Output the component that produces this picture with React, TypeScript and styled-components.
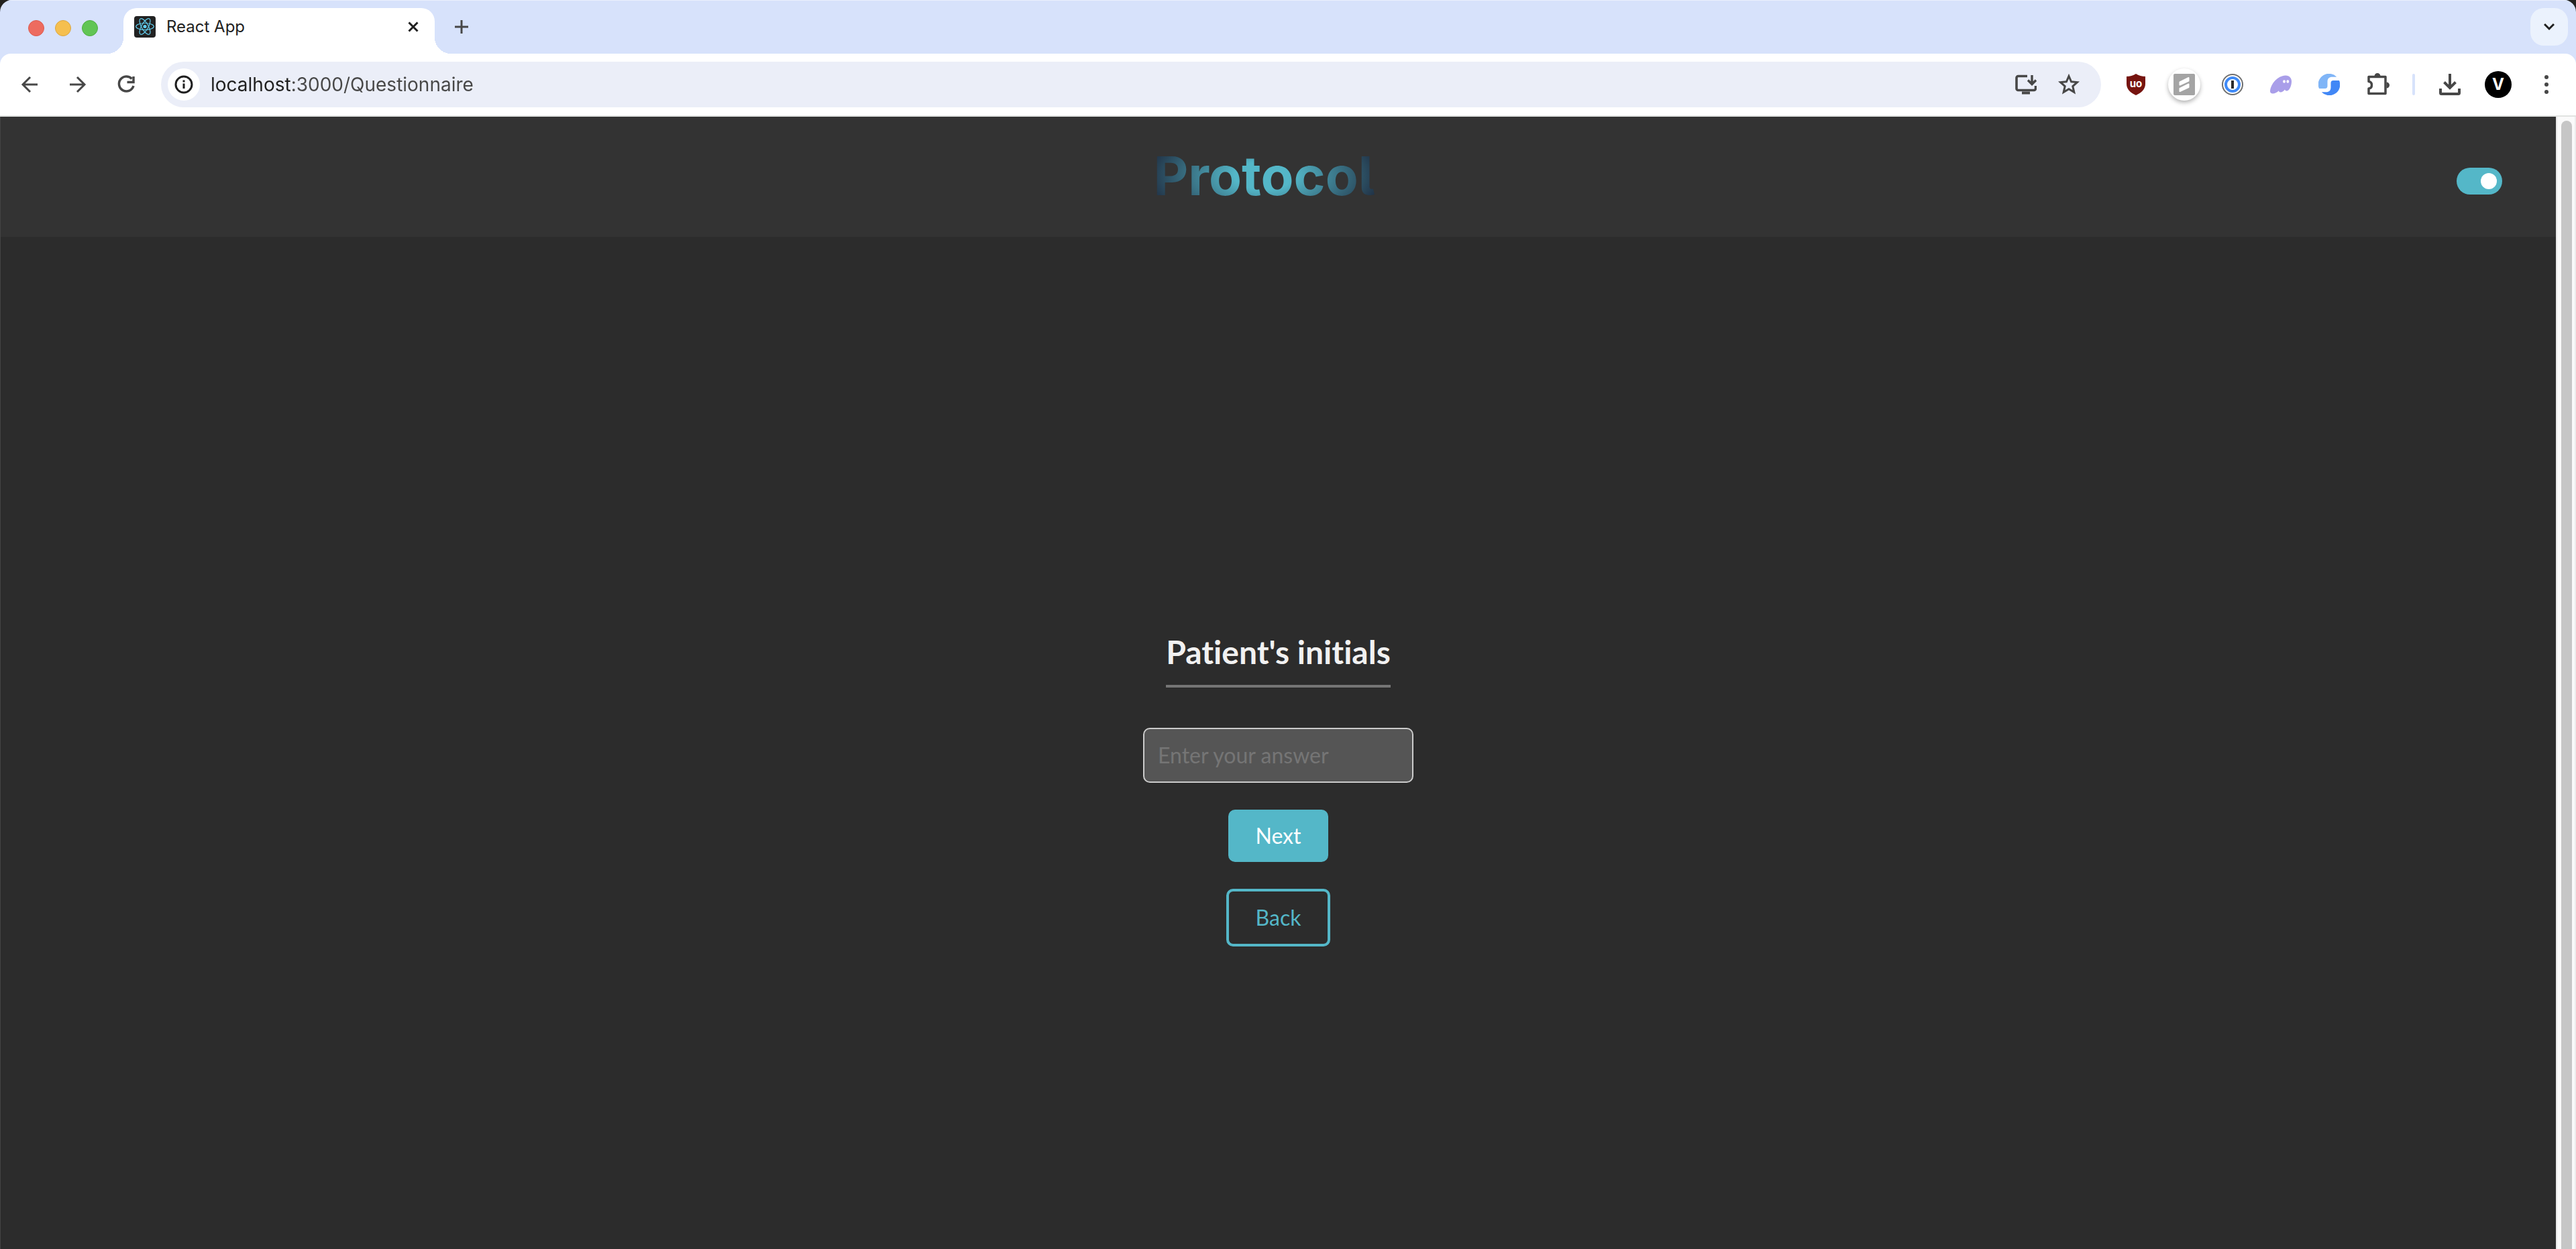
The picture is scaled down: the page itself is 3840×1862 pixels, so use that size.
import React, { useState } from 'react';
import styled, { createGlobalStyle, css } from 'styled-components';

const TEAL = '#54b7c8';
const INK = '#474747';
const UI_FONT = "Inter, 'Liberation Sans', sans-serif";
const PAGE_FONT = "Lato, 'Open Sans', sans-serif";

const GlobalStyle = createGlobalStyle`
  *, *::before, *::after { box-sizing: border-box; }
  body { margin: 0; background: #23221f; font-family: ${UI_FONT}; }
  button, input { font: inherit; margin: 0; }
`;

const BrowserWindow = styled.div`
  display: flex;
  flex-direction: column;
  height: 100vh;
  overflow: hidden;
  border-radius: 18px 18px 0 0;
  background: #d7e2fb;
`;

/* ---------- tab strip ---------- */

const TabStrip = styled.header`
  display: flex;
  align-items: flex-end;
  height: 80px;
  flex: none;
  padding-right: 12px;
  border-top: 1px solid #eaf0fc;
`;

const WindowControls = styled.div`
  display: flex;
  align-self: center;
  gap: 16px;
  width: 184px;
  padding: 2px 0 0 42px;
`;

const Light = styled.button<{ $fill: string; $edge: string }>`
  width: 24px;
  height: 24px;
  padding: 0;
  border: 1px solid ${(p) => p.$edge};
  border-radius: 50%;
  background: ${(p) => p.$fill};
`;

const Tab = styled.div`
  position: relative;
  display: flex;
  align-items: center;
  width: 464px;
  height: 68px;
  padding: 0 16px 12px;
  border-radius: 20px 20px 0 0;
  background: #fff;

  &::before,
  &::after {
    content: '';
    position: absolute;
    bottom: 0;
    width: 24px;
    height: 24px;
  }
  &::before {
    right: 100%;
    background: radial-gradient(circle at 0 0, transparent 24px, #fff 24px);
  }
  &::after {
    left: 100%;
    background: radial-gradient(circle at 100% 0, transparent 24px, #fff 24px);
  }
`;

const TabTitle = styled.span`
  flex: 1;
  padding-left: 16px;
  font-size: 24px;
  line-height: 32px;
  color: #1f1f1f;
`;

const IconButton = styled.button<{ $width?: number }>`
  display: flex;
  align-items: center;
  justify-content: center;
  flex: none;
  width: ${(p) => p.$width ?? 72}px;
  height: 56px;
  padding: 0;
  border: 0;
  background: none;
  color: ${INK};
`;

const StripButton = styled(IconButton)`
  margin: 0 12px 12px;
`;

const TabSearch = styled(StripButton)`
  margin: 0 0 12px auto;
  border-radius: 20px;
  background: #ebf2fd;
  color: #1f1f1f;
`;

/* ---------- toolbar ---------- */

const Toolbar = styled.div`
  display: flex;
  align-items: center;
  flex: none;
  height: 94px;
  padding: 0 8px;
  border-bottom: 2px solid #e1e3e1;
  border-radius: 16px 16px 0 0;
  background: #fff;
`;

const AddressBar = styled.div`
  display: flex;
  align-items: center;
  flex: 1;
  height: 68px;
  margin: 0 16px;
  padding: 0 16px 0 10px;
  border-radius: 34px;
  background: #ebeef8;
`;

const SiteInfo = styled.button`
  display: flex;
  align-items: center;
  justify-content: center;
  width: 48px;
  height: 48px;
  padding: 0;
  border: 0;
  border-radius: 50%;
  background: #fff;
  color: #1f1f1f;
`;

const Address = styled.input`
  flex: 1;
  min-width: 0;
  height: 40px;
  margin-left: 16px;
  padding: 0;
  border: 0;
  outline: 0;
  font-size: 28px;
  line-height: 40px;
  color: transparent;
  background: linear-gradient(90deg, #1f1f1f 120px, ${INK} 120px);
  background-clip: text;
  -webkit-background-clip: text;
`;

const Raised = styled.span`
  display: flex;
  align-items: center;
  justify-content: center;
  width: 48px;
  height: 48px;
  border-radius: 50%;
  background: #fff;
  box-shadow: 0 3px 6px rgba(0, 0, 0, 0.3);
`;

const Divider = styled.span`
  width: 4px;
  height: 32px;
  margin: 0 16px;
  border-radius: 2px;
  background: #d7e2fb;
`;

const Avatar = styled.span`
  display: flex;
  align-items: center;
  justify-content: center;
  width: 40px;
  height: 40px;
  border-radius: 50%;
  background: #000;
  color: #fff;
  font-size: 24px;
  font-weight: 700;
  line-height: 40px;
`;

/* ---------- page ---------- */

const Viewport = styled.div`
  display: flex;
  flex: 1;
  min-height: 0;
`;

const Page = styled.div`
  display: flex;
  flex-direction: column;
  flex: 1;
  border-left: 1px solid #444;
  background: #2c2c2c;
  color: #f1f1f1;
  font-family: ${PAGE_FONT};
`;

const PageHeader = styled.header`
  display: flex;
  align-items: center;
  justify-content: space-between;
  padding: 40px 80px 43px;
  background: #333;

  &::before {
    content: '';
    width: 26px;
  }
`;

const Brand = styled.h1`
  margin: 0;
  font-family: ${UI_FONT};
  font-feature-settings: 'cv05';
  font-size: 80px;
  font-weight: 700;
  line-height: 96px;
  color: transparent;
  background: radial-gradient(54% 85% at center, ${TEAL} 25%, #203044 100%);
  background-clip: text;
  -webkit-background-clip: text;
`;

const Switch = styled.input`
  appearance: none;
  display: flex;
  align-items: center;
  width: 68px;
  height: 40px;
  margin-top: 16px;
  padding: 8px;
  border-radius: 20px;
  background: #777;

  &::after {
    content: '';
    width: 24px;
    height: 24px;
    border-radius: 50%;
    background: #fff;
  }
  &:checked {
    justify-content: flex-end;
    background: ${TEAL};
  }
`;

const Main = styled.main`
  display: flex;
  flex: 1;
  flex-direction: column;
  align-items: center;
  justify-content: center;
  padding-top: 139px;
`;

const Form = styled.form`
  display: flex;
  flex-direction: column;
  align-items: center;
  gap: 40px;
  font-size: 32px;
  line-height: 38px;
  font-variant-ligatures: none;
`;

const Question = styled.label`
  margin-bottom: 20px;
  padding-bottom: 20px;
  border-bottom: 4px solid #757575;
  font-size: 48px;
  font-weight: 700;
  line-height: 58px;
`;

const Answer = styled.input`
  width: 403px;
  padding: 20px;
  border: 2px solid #ccc;
  border-radius: 10px;
  outline: 0;
  background: #555;
  color: #f1f1f1;

  &::placeholder {
    color: #757575;
  }
`;

const Action = styled.button<{ $outlined?: boolean }>`
  padding: 20px 40px;
  border: 0;
  border-radius: 10px;
  background: ${TEAL};
  color: #fff;
  ${(p) =>
    p.$outlined &&
    css`
      border: 4px solid ${TEAL};
      background: transparent;
      color: ${TEAL};
    `}
`;

const ScrollTrack = styled.div`
  display: flex;
  width: 30px;
  padding: 6px 4px 0 6px;
  border-left: 2px solid #e8e8e8;
  border-right: 2px solid #ededed;
  background: #fafafa;
`;

const ScrollThumb = styled.div`
  flex: 1;
  border-radius: 8px 8px 0 0;
  background: #c6c6c6;
`;

/* ---------- drawings ---------- */

const Glyph = ({ size = 32, children }: { size?: number; children: React.ReactNode }) => (
  <svg width={size} height={size} viewBox={`0 0 ${size} ${size}`} fill="none" stroke="currentColor" strokeWidth="3" aria-hidden="true">
    {children}
  </svg>
);

const ReactLogo = () => (
  <svg width="32" height="32" viewBox="0 0 32 32" fill="none" stroke="#61cdee" strokeWidth="1.2" aria-hidden="true">
    <rect width="32" height="32" rx="4" fill="#222" stroke="none" />
    <ellipse cx="16" cy="15.5" rx="13.3" ry="5" />
    <ellipse cx="16" cy="15.5" rx="13.3" ry="5" transform="rotate(60 16 15.5)" />
    <ellipse cx="16" cy="15.5" rx="13.3" ry="5" transform="rotate(120 16 15.5)" />
    <circle cx="16" cy="15.5" r="2.6" fill="#61cdee" stroke="none" />
  </svg>
);

const Shield = () => (
  <Glyph>
    <path d="M16 0c4 2.800 9 4 14 4v11c0 8-6 13.500-14 17C8 28.500 2 23 2 15V4c5 0 10-1.200 14-4z" fill="#76140f" stroke="none" />
    <text x="16" y="20" textAnchor="middle" fontFamily="Inter, sans-serif" fontSize="15" fontWeight="700" fill="#fff" stroke="none">uo</text>
  </Glyph>
);

const SlashBox = () => (
  <Glyph>
    <rect width="32" height="32" rx="2" fill="#a4a4a4" stroke="none" />
    <path d="M9.500 16.500v-4L22.500 6v4.500zM9.500 26v-4l13-6.500V20z" fill="#fff" stroke="#fff" strokeWidth="2" strokeLinejoin="round" />
  </Glyph>
);

const KeyRing = () => (
  <Glyph>
    <circle cx="16" cy="16" r="15" stroke="#6f6f6f" strokeWidth="2" />
    <circle cx="16" cy="16" r="10" stroke="#3f8af7" strokeWidth="4" />
    <path d="M16 10v12" stroke="#2b2b2b" strokeWidth="4" />
  </Glyph>
);

const Ghost = () => (
  <Glyph>
    <path d="M0 26C1 15 11 3 23 2.500c6 0 9 4 9 9 0 6-3 14-7.500 14-1.500 0-2-1-2.500-2-1.500 2-4 4-6.500 4-1.500 0-2.500-.8-2.500-2.200C10.500 28 7 29.500 4 29.500c-2.500 0-4-1.500-4-3.500z" fill="#a99ee9" stroke="none" />
    <ellipse cx="21" cy="11.500" rx="1.900" ry="2.200" fill="#fff" stroke="none" />
    <ellipse cx="26.300" cy="11.500" rx="1.900" ry="2.200" fill="#fff" stroke="none" />
  </Glyph>
);

const Swirl = () => (
  <Glyph>
    <path d="M27.300 4.700A16 16 0 0 0 1 22h8.500c3 0 4-1.300 4-4v-6c0-5 2.500-7.300 7-7.300z" fill="#80b5f7" stroke="none" />
    <path d="M31 10h-8.500c-3 0-4 1.300-4 4v6c0 5-2.500 7.300-7 7.300H4.700A16 16 0 0 0 31 10z" fill="#4187f6" stroke="none" />
  </Glyph>
);

const Puzzle = () => (
  <Glyph size={36}>
    <path d="M5 6.500h25v25H5V24c6-.8 6-9.700 0-10.500z" strokeWidth="3.500" strokeLinejoin="round" />
    <path d="M13.500 5.500a4.500 4.500 0 0 1 9 0zM31.500 14.500a4.500 4.500 0 0 1 0 9z" fill="currentColor" stroke="none" />
  </Glyph>
);

const extensions = [
  { name: 'uBlock Origin', icon: <Shield /> },
  { name: 'Recorder', icon: <Raised><SlashBox /></Raised> },
  { name: '1Password', icon: <KeyRing /> },
  { name: 'Phantom', icon: <Ghost /> },
  { name: 'Grammar', icon: <Swirl /> },
  { name: 'Extensions', icon: <Puzzle /> },
];

export default function App() {
  const [dark, setDark] = useState(true);
  const [answer, setAnswer] = useState('');

  return (
    <>
      <GlobalStyle />
      <BrowserWindow>
        <TabStrip>
          <WindowControls>
            <Light aria-label="Close window" $fill="#ed6b5f" $edge="#dc5b50" />
            <Light aria-label="Minimize window" $fill="#f5bf4f" $edge="#dba640" />
            <Light aria-label="Zoom window" $fill="#61c554" $edge="#50ae42" />
          </WindowControls>
          <Tab>
            <ReactLogo />
            <TabTitle>React App</TabTitle>
            <IconButton $width={32} aria-label="Close tab">
              <Glyph size={16}><path d="M1.500 1.500l13 13M14.500 1.500l-13 13" stroke="#1f1f1f" /></Glyph>
            </IconButton>
          </Tab>
          <StripButton $width={56} aria-label="New tab">
            <Glyph size={20}><path d="M10 0v20M0 10h20" /></Glyph>
          </StripButton>
          <TabSearch $width={56} aria-label="Search tabs">
            <Glyph size={16}><path d="M1 4l7 7 7-7" /></Glyph>
          </TabSearch>
        </TabStrip>

        <Toolbar>
          <IconButton aria-label="Back">
            <Glyph><path d="M28 16H6M17 5L6 16l11 11" /></Glyph>
          </IconButton>
          <IconButton aria-label="Forward">
            <Glyph><path d="M4 16h22M15 5l11 11-11 11" /></Glyph>
          </IconButton>
          <IconButton aria-label="Reload">
            <Glyph>
              <path d="M24.500 7.500A11 11 0 1 0 27 18" strokeWidth="3.500" />
              <path d="M27 4v8.500H17.500" strokeWidth="3.500" />
            </Glyph>
          </IconButton>
          <AddressBar>
            <SiteInfo aria-label="View site information">
              <Glyph>
                <circle cx="16" cy="16" r="12" />
                <path d="M16 14.500V22M16 9.500v3" />
              </Glyph>
            </SiteInfo>
            <Address aria-label="Address" defaultValue="localhost:3000/Questionnaire" />
            <IconButton $width={64} aria-label="Install app">
              <Glyph>
                <path d="M18 3.500H4.500a2.500 2.500 0 0 0-2.500 2.500v16a2.500 2.500 0 0 0 2.500 2.500h23.500a2.500 2.500 0 0 0 2.500-2.500v-4" strokeWidth="3.600" />
                <path d="M10 28.500h12" strokeWidth="4" />
                <path d="M25 2v13M19 9.500l6 6 6-6" strokeWidth="3.400" />
              </Glyph>
            </IconButton>
            <IconButton $width={64} aria-label="Bookmark this tab">
              <Glyph>
                <path d="M16 3.500l3.600 8.300 9 .8-6.800 6 2 8.800L16 22.800l-7.800 4.600 2-8.800-6.800-6 9-.8z" />
              </Glyph>
            </IconButton>
          </AddressBar>
          {extensions.map((e) => (
            <IconButton key={e.name} aria-label={e.name}>{e.icon}</IconButton>
          ))}
          <Divider />
          <IconButton aria-label="Downloads">
            <Glyph>
              <path d="M16 0v21M7.500 12.500L16 21l8.500-8.500M2 22v6.500c0 1 .5 1.500 1.500 1.500h25c1 0 1.500-.5 1.500-1.500V22" strokeWidth="4" />
            </Glyph>
          </IconButton>
          <IconButton aria-label="Profile"><Avatar>V</Avatar></IconButton>
          <IconButton aria-label="Menu">
            <Glyph>
              <g fill="currentColor" stroke="none">
                <circle cx="16" cy="5" r="3" />
                <circle cx="16" cy="16" r="3" />
                <circle cx="16" cy="27" r="3" />
              </g>
            </Glyph>
          </IconButton>
        </Toolbar>

        <Viewport>
          <Page>
            <PageHeader>
              <Brand>Protocol</Brand>
              <Switch type="checkbox" aria-label="Dark mode" checked={dark} onChange={(e) => setDark(e.target.checked)} />
            </PageHeader>
            <Main>
              <Form onSubmit={(e) => e.preventDefault()}>
                <Question htmlFor="answer">Patient's initials</Question>
                <Answer id="answer" placeholder="Enter your answer" value={answer} onChange={(e) => setAnswer(e.target.value)} />
                <Action type="submit">Next</Action>
                <Action type="button" $outlined>Back</Action>
              </Form>
            </Main>
          </Page>
          <ScrollTrack><ScrollThumb /></ScrollTrack>
        </Viewport>
      </BrowserWindow>
    </>
  );
}
